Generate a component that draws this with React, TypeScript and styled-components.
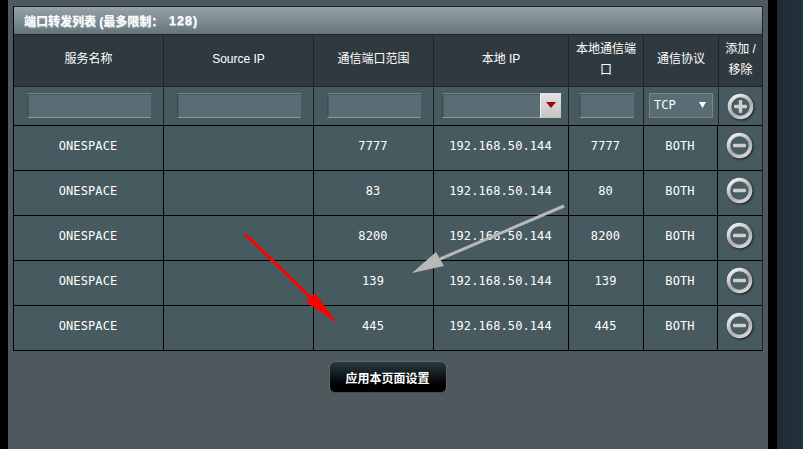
import React from "react";
import styled, { createGlobalStyle } from "styled-components";

const Global = createGlobalStyle`
  html, body { margin: 0; padding: 0; background: #1f2d35; overflow: hidden; }
  #root { width: 803px; height: 449px; }
`;

const Page = styled.div`
  display: flex;
  width: 803px;
  height: 449px;
  position: relative;
  overflow: hidden;
  font-family: "Liberation Sans", "Noto Sans CJK SC", sans-serif;
`;
const Edge = styled.div`
  width: 8px;
  background: #000;
`;
const Panel = styled.main`
  width: 760px;
  box-sizing: border-box;
  padding: 6px 5px 0;
  background: #4d595d;
  display: flex;
  flex-direction: column;
  align-items: stretch;
`;
const Gutter = styled.div`
  width: 9px;
  background: #000;
`;
const Backdrop = styled.div`
  flex: 1;
  background: linear-gradient(90deg, #1d2c35, #22323b);
`;
const Table = styled.section`
  width: 750px;
  box-sizing: border-box;
  border: 1px solid #000;
  border-top-color: #222;
  border-right-color: #222;
`;
const Title = styled.h2`
  margin: 0;
  height: 28px;
  box-sizing: border-box;
  padding-left: 10px;
  display: flex;
  align-items: center;
  white-space: pre;
  font-size: 12px;
  font-weight: bold;
  color: #fff;
  text-shadow: 0.5px 0.5px 1px #c4d0d4;
  background: linear-gradient(180deg, #95a3a7 0%, #64747a 100%);
  border-bottom: 1px solid #222;
`;
const TitleNumber = styled.span`
  font-size: 13px;
  letter-spacing: 0.8px;
  margin-left: 2px;
`;

const headCols = "150px 150px 120px 135px 75px 75px 1fr";
const bodyCols = "150px 150px 120px 135px 75px 74px 1fr";

const Head = styled.div`
  display: grid;
  grid-template-columns: ${headCols};
  height: 51px;
  background: #2f3a40;
  border-bottom: 1px solid #222;
`;
const HeadCell = styled.div`
  display: flex;
  align-items: center;
  justify-content: center;
  text-align: center;
  font-size: 12px;
  line-height: 21px;
  color: #fff;
  box-sizing: border-box;
  padding: 0 5px 2px;
  border-right: 1px solid #222;
  &:last-child { border-right: 0; }
`;
const Filter = styled.div`
  display: grid;
  grid-template-columns: ${headCols};
  height: 39px;
  box-sizing: border-box;
  background: #475a5f;
  border-bottom: 1px solid #000;
`;
const FilterCell = styled.div<{ $shift?: number }>`
  display: flex;
  align-items: center;
  justify-content: center;
  padding-bottom: 2px;
  padding-left: ${(p) => p.$shift ?? 0}px;
  box-sizing: border-box;
  border-right: 1px solid #222;
`;
const IconFilterCell = styled.div`
  display: flex;
  align-items: center;
  justify-content: center;
  padding: 1px 2px 0 0;
  box-sizing: border-box;
`;
const Field = styled.div<{ $w: number }>`
  width: ${(p) => p.$w}px;
  height: 25px;
  box-sizing: border-box;
  background: #596e74;
  border-top: 1px solid #75868a;
  border-bottom: 1px solid #8a9a9e;
  border-left: 1px solid #3f4d52;
  border-right: 1px solid #5d7076;
  box-shadow: inset 0 1px 0 #43555a, inset 1px 0 0 #4a5d62;
  display: flex;
  justify-content: flex-end;
`;
const ComboButton = styled.div`
  width: 20px;
  margin: -1px -1px -1px 0;
  background: linear-gradient(180deg, #e4e4e4, #c4c4c4);
  border-left: 1px solid #eee;
  display: flex;
  align-items: center;
  justify-content: center;
`;
const Select = styled.div`
  width: 64px;
  height: 25px;
  box-sizing: border-box;
  border: 1px solid #7d8588;
  background: #596e74;
  padding: 0 6px 0 4px;
  display: flex;
  align-items: center;
  justify-content: space-between;
  color: #fff;
  font: 12px "DejaVu Sans Mono", monospace;
`;
const Row = styled.div`
  display: grid;
  grid-template-columns: ${bodyCols};
  height: 45px;
  box-sizing: border-box;
  background: #475a5f;
  border-bottom: 1px solid #000;
  &:last-child { border-bottom: 0; height: 44px; }
`;
const Cell = styled.div`
  display: flex;
  align-items: center;
  justify-content: center;
  box-sizing: border-box;
  padding: 0 1px 4px 0;
  border-right: 1px solid #000;
  color: #fff;
  letter-spacing: 0.1px;
  font: 12px "DejaVu Sans Mono", monospace;
`;
const IconCell = styled.div`
  display: flex;
  align-items: center;
  justify-content: center;
  box-sizing: border-box;
  padding: 0 2px 4px 0;
`;
const ButtonBar = styled.div`
  display: flex;
  justify-content: center;
  padding-top: 10px;
  padding-right: 1px;
`;
const ApplyButton = styled.button`
  width: 118px;
  height: 32px;
  padding: 0;
  border: 1px solid #5d686c;
  border-bottom-color: #414c50;
  border-radius: 6px;
  background: linear-gradient(180deg, #2a3a41 0%, #000 75%);
  color: #fff;
  font: bold 12px "Liberation Sans", "Noto Sans CJK SC", sans-serif;
`;
const Arrows = styled.svg`
  position: absolute;
  inset: 0;
  pointer-events: none;
`;
const IconSvg = styled.svg`
  filter: drop-shadow(1px 1.5px 1px rgba(0, 0, 0, 0.65));
`;

const RoundIcon = ({ plus }: { plus?: boolean }) => {
  const id = plus ? "ring-plus" : "ring-minus";
  return (
    <IconSvg width="28" height="28" viewBox="0 0 28 28">
      <defs>
        <linearGradient id={id} x1="0.15" y1="0" x2="0.75" y2="1">
          <stop offset="0" stopColor="#f4f4f4" />
          <stop offset="0.6" stopColor="#a9a9a9" />
          <stop offset="1" stopColor="#d8d8d8" />
        </linearGradient>
      </defs>
      <circle cx="14.5" cy="13.5" r="11" fill="#4a5d62" stroke={`url(#${id})`} strokeWidth="3.6" />
      <rect x="8" y="11.8" width="13" height="3.4" rx="1.2" fill="#cfcfcf" />
      {plus && <rect x="12.8" y="7" width="3.4" height="13" rx="1.2" fill="#cfcfcf" />}
    </IconSvg>
  );
};

const rows = [
  ["7777", "7777"],
  ["83", "80"],
  ["8200", "8200"],
  ["139", "139"],
  ["445", "445"],
];

export default function App() {
  return (
    <Page>
      <Global />
      <Edge />
      <Panel>
        <Table>
          <Title>
            端口转发列表 (最多限制： <TitleNumber>128)</TitleNumber>
          </Title>
          <Head>
            <HeadCell>服务名称</HeadCell>
            <HeadCell>Source IP</HeadCell>
            <HeadCell>通信端口范围</HeadCell>
            <HeadCell>本地 IP</HeadCell>
            <HeadCell>本地通信端口</HeadCell>
            <HeadCell>通信协议</HeadCell>
            <HeadCell>添加 / 移除</HeadCell>
          </Head>
          <Filter>
            <FilterCell $shift={1}><Field $w={124} /></FilterCell>
            <FilterCell $shift={1}><Field $w={124} /></FilterCell>
            <FilterCell $shift={1}><Field $w={94} /></FilterCell>
            <FilterCell>
              <Field $w={119}>
                <ComboButton>
                  <svg width="10" height="6" viewBox="0 0 10 6"><path d="M0 0h10L5 6z" fill="#a00010" /></svg>
                </ComboButton>
              </Field>
            </FilterCell>
            <FilterCell><Field $w={55} /></FilterCell>
            <FilterCell>
              <Select>
                TCP
                <svg width="7" height="6" viewBox="0 0 7 6"><path d="M0 0h7L3.5 6z" fill="#fff" /></svg>
              </Select>
            </FilterCell>
            <IconFilterCell><RoundIcon plus /></IconFilterCell>
          </Filter>
          {rows.map(([ext, local], i) => (
            <Row key={i}>
              <Cell>ONESPACE</Cell>
              <Cell />
              <Cell>{ext}</Cell>
              <Cell>192.168.50.144</Cell>
              <Cell>{local}</Cell>
              <Cell>BOTH</Cell>
              <IconCell><RoundIcon /></IconCell>
            </Row>
          ))}
        </Table>
        <ButtonBar>
          <ApplyButton>应用本页面设置</ApplyButton>
        </ButtonBar>
      </Panel>
      <Gutter />
      <Backdrop />
      <Arrows width="803" height="449" viewBox="0 0 803 449">
        <line x1="245" y1="234" x2="312" y2="299" stroke="#f00" strokeWidth="3" />
        <path d="M337 323L306 302L315 293z" fill="#f00" />
        <line x1="564" y1="206" x2="440" y2="259" stroke="#b8b8b8" strokeWidth="3" />
        <path d="M412 273L436 252L444 266z" fill="#b8b8b8" />
      </Arrows>
    </Page>
  );
}
